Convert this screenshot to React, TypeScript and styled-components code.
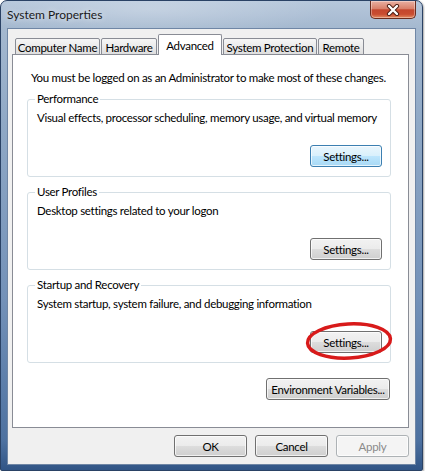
import styled, { createGlobalStyle } from 'styled-components';

const GlobalStyle = createGlobalStyle`
  html, body {
    margin: 0;
    padding: 0;
    background: #ffffff;
  }
  body {
    font-family: Lato, 'Liberation Sans', Arial, sans-serif;
    font-size: 11.5px;
    letter-spacing: -0.3px;
    color: #000;
  }
`;

const SWindow = styled.div`
  width: 423px;
  height: 471px;
  box-sizing: border-box;
  display: flex;
  flex-direction: column;
  border: 1px solid #2a4265;
  border-radius: 7px 7px 2px 2px;
  background:
    radial-gradient(ellipse 180px 30px at 150px 8px, rgba(255, 255, 255, 0.25), rgba(255, 255, 255, 0)),
    linear-gradient(180deg, #b6c7db 0px, #a4b8cf 28px, #90a9c6 120px, #7391b8 300px, #4d71a0 440px, #2f5384 471px);
  box-shadow: 1px 1px 2px rgba(0, 0, 0, 0.35);
`;

const STitleBar = styled.div`
  height: 27px;
  display: flex;
  justify-content: space-between;
  align-items: flex-start;
  padding: 0 6px;
`;

const STitle = styled.div`
  margin-top: 6px;
  line-height: 16px;
  font-size: 12px;
  letter-spacing: 0;
  color: #1a1a1a;
  text-shadow: 0 0 6px rgba(255, 255, 255, 0.8);
`;

const SClose = styled.div`
  width: 46px;
  height: 18px;
  box-sizing: border-box;
  display: flex;
  align-items: center;
  justify-content: center;
  border: 1px solid #6b2c1e;
  border-top: none;
  border-radius: 0 0 5px 5px;
  background: linear-gradient(180deg, #e9b0a2 0%, #d9806a 45%, #c4472e 52%, #c94d31 78%, #e38c62 100%);
  box-shadow: inset 0 0 0 1px rgba(255, 255, 255, 0.35);
`;

const SClient = styled.div`
  flex: 1;
  margin: 0 6px 5px;
  display: flex;
  flex-direction: column;
  border: 1px solid #6f86a5;
  background: #f0f0f0;
  padding: 5px 6px 7px 4px;
`;

const STabs = styled.div`
  display: flex;
  align-items: flex-end;
  gap: 1px;
  padding-left: 3px;
  margin-bottom: -1px;
`;

const STab = styled.div<{ $active?: boolean; $w: number }>`
  width: ${(p) => p.$w}px;
  height: ${(p) => (p.$active ? 21 : 17)}px;
  box-sizing: border-box;
  display: flex;
  align-items: center;
  justify-content: center;
  border: 1px solid #898c95;
  border-bottom: ${(p) => (p.$active ? 'none' : '1px solid #898c95')};
  border-radius: 2px 2px 0 0;
  background: ${(p) =>
    p.$active ? '#ffffff' : 'linear-gradient(180deg, #f6f6f6 0%, #ebebeb 50%, #dedede 100%)'};
  position: relative;
  z-index: ${(p) => (p.$active ? 2 : 1)};
  white-space: nowrap;
  padding-top: ${(p) => (p.$active ? 0 : 1)}px;
`;

const SPanel = styled.div`
  flex: 1;
  display: flex;
  flex-direction: column;
  background: #ffffff;
  border: 1px solid #898c95;
  padding: 15px 17px 0 14px;
`;

const SNotice = styled.div`
  margin-left: 4px;
  line-height: 16px;
  white-space: nowrap;
`;

const SGroup = styled.div<{ $first?: boolean }>`
  height: 78px;
  box-sizing: border-box;
  display: flex;
  flex-direction: column;
  margin-top: ${(p) => (p.$first ? 13 : 15)}px;
  border: 1px solid #d5dfe5;
  border-radius: 3px;
  padding: 0 8px 9px 7px;
`;

const SLegend = styled.div`
  align-self: flex-start;
  margin-top: -9px;
  padding: 0 2px;
  line-height: 16px;
  background: #ffffff;
`;

const SDesc = styled.div`
  margin: 3px 0 0 2px;
  line-height: 16px;
  white-space: nowrap;
`;

const SButton = styled.button<{ $w?: number; $variant?: 'default' | 'disabled' }>`
  width: ${(p) => p.$w ?? 72}px;
  height: 22px;
  padding: 0;
  font-family: inherit;
  font-size: 11.5px;
  letter-spacing: -0.3px;
  white-space: nowrap;
  color: ${(p) => (p.$variant === 'disabled' ? '#8a8a8a' : '#000')};
  border: 1px solid
    ${(p) => (p.$variant === 'default' ? '#3c7fb1' : p.$variant === 'disabled' ? '#adb2b5' : '#707070')};
  border-radius: 3px;
  background: ${(p) =>
    p.$variant === 'default'
      ? 'linear-gradient(180deg, #eaf6fd 0%, #d9f0fc 50%, #bee6fd 50%, #a7d9f5 100%)'
      : p.$variant === 'disabled'
        ? '#f4f4f4'
        : 'linear-gradient(180deg, #f2f2f2 0%, #ebebeb 50%, #dddddd 50%, #cfcfcf 100%)'};
  box-shadow: inset 0 0 0 1px rgba(255, 255, 255, 0.7);
`;

const SGroupButton = styled.div`
  margin-top: auto;
  align-self: flex-end;
  position: relative;
  display: flex;
`;

const SMark = styled.svg`
  position: absolute;
  left: -6px;
  top: -11px;
  pointer-events: none;
`;

const SEnvRow = styled.div`
  display: flex;
  justify-content: flex-end;
  margin: 15px 1px 0 0;
`;

const SFooter = styled.div`
  display: flex;
  justify-content: flex-end;
  gap: 8px;
  margin-top: 7px;
`;

const tabs = [
  { label: 'Computer Name', w: 85 },
  { label: 'Hardware', w: 56 },
  { label: 'Advanced', w: 64, active: true },
  { label: 'System Protection', w: 94 },
  { label: 'Remote', w: 46 },
];

const groups = [
  { title: 'Performance', text: 'Visual effects, processor scheduling, memory usage, and virtual memory', focus: true },
  { title: 'User Profiles', text: 'Desktop settings related to your logon' },
  { title: 'Startup and Recovery', text: 'System startup, system failure, and debugging information', marked: true },
];

export default function App() {
  return (
    <>
      <GlobalStyle />
      <SWindow>
        <STitleBar>
          <STitle>System Properties</STitle>
          <SClose>
            <svg width="14" height="12" viewBox="0 0 14 12">
              <path d="M3 2 L11 10 M11 2 L3 10" stroke="#4a1b12" strokeWidth="4.2" strokeLinecap="round" />
              <path d="M3 2 L11 10 M11 2 L3 10" stroke="#ffffff" strokeWidth="2.4" strokeLinecap="round" />
            </svg>
          </SClose>
        </STitleBar>
        <SClient>
          <STabs>
            {tabs.map((t) => (
              <STab key={t.label} $w={t.w} $active={t.active}>
                {t.label}
              </STab>
            ))}
          </STabs>
          <SPanel>
            <SNotice>You must be logged on as an Administrator to make most of these changes.</SNotice>
            {groups.map((g, i) => (
              <SGroup key={g.title} $first={i === 0}>
                <SLegend>{g.title}</SLegend>
                <SDesc>{g.text}</SDesc>
                <SGroupButton>
                  <SButton $variant={g.focus ? 'default' : undefined}>Settings...</SButton>
                  {g.marked && (
                    <SMark width="90" height="42" viewBox="0 0 90 42">
                      <ellipse
                        cx="45"
                        cy="21"
                        rx="41.5"
                        ry="17"
                        fill="none"
                        stroke="#d81a1a"
                        strokeWidth="3.5"
                        transform="rotate(-3 45 21)"
                      />
                    </SMark>
                  )}
                </SGroupButton>
              </SGroup>
            ))}
            <SEnvRow>
              <SButton $w={124}>Environment Variables...</SButton>
            </SEnvRow>
          </SPanel>
          <SFooter>
            <SButton $w={73}>OK</SButton>
            <SButton $w={73}>Cancel</SButton>
            <SButton $w={73} $variant="disabled">
              Apply
            </SButton>
          </SFooter>
        </SClient>
      </SWindow>
    </>
  );
}
